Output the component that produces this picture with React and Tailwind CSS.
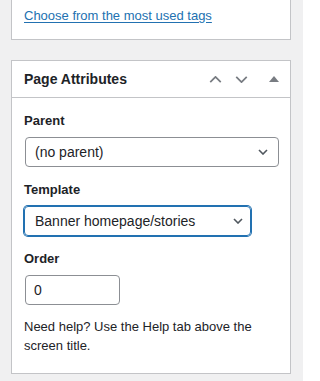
import React from "react";

const Chevron = ({ up, className }) => (
  <svg viewBox="0 0 14 8" className={className} fill="none" stroke="currentColor" strokeWidth="2">
    {up ? <path d="M1 7l6-6 6 6" /> : <path d="M1 1l6 6 6-6" />}
  </svg>
);

const SelectArrow = () => (
  <svg viewBox="0 0 10 6" className="w-[10px] h-[6px] text-[#50575e]" fill="none" stroke="currentColor" strokeWidth="1.6">
    <path d="M1 1l4 4 4-4" />
  </svg>
);

const App = () => {
  return (
    <div
      className="w-[303px] h-[381px] bg-[#f0f0f1] overflow-hidden text-[#1d2327]"
      style={{ fontFamily: '"Liberation Sans", Arial, sans-serif' }}
    >
      {/* tags box (top cut off) */}
      <div className="mx-[11px] w-[280px] h-[40px] bg-white border-x border-b border-[#c3c4c7] pl-[12px] pt-[3px]">
        <a href="#" className="text-[13px] text-[#2271b1] underline underline-offset-2">
          Choose from the most used tags
        </a>
      </div>

      {/* Page Attributes */}
      <div className="mx-[11px] mt-[20px] w-[280px] bg-white border border-[#c3c4c7]">
        <div className="h-[37px] flex items-center justify-between border-b border-[#c3c4c7] pl-[12px] pr-[11px]">
          <h2 className="text-[14px] font-bold">Page Attributes</h2>
          <div className="flex items-center">
            <Chevron up className="w-[13px] h-[7px] text-[#787c82]" />
            <Chevron className="w-[13px] h-[7px] ml-[13px] text-[#787c82]" />
            <span className="ml-[21px] w-0 h-0 border-x-[5px] border-x-transparent border-b-[6px] border-b-[#787c82]" />
          </div>
        </div>

        <div className="px-[12px] pt-[14px] pb-[18px]">
          <p className="text-[13px] font-bold leading-[18px]">Parent</p>
          <div className="mt-[7px] h-[30px] w-[254px] ml-px flex items-center justify-between border border-[#8c8f94] rounded-[4px] pl-[9px] pr-[10px]">
            <span className="text-[14px]">(no parent)</span>
            <SelectArrow />
          </div>

          <p className="mt-[14px] text-[13px] font-bold leading-[18px]">Template</p>
          <div className="mt-[7px] h-[30px] w-[227px] flex items-center justify-between border border-[#2271b1] shadow-[0_0_0_1px_#2271b1] rounded-[4px] pl-[10px] pr-[7px]">
            <span className="text-[14px]">Banner homepage/stories</span>
            <SelectArrow />
          </div>

          <p className="mt-[14px] text-[13px] font-bold leading-[18px]">Order</p>
          <div className="mt-[7px] h-[30px] w-[95px] ml-px flex items-center border border-[#8c8f94] rounded-[4px] pl-[8px]">
            <span className="text-[14px]">0</span>
          </div>

          <p className="mt-[12px] text-[13px] leading-[19px]">
            Need help? Use the Help tab above the screen title.
          </p>
        </div>
      </div>
    </div>
  );
};

export default App;
